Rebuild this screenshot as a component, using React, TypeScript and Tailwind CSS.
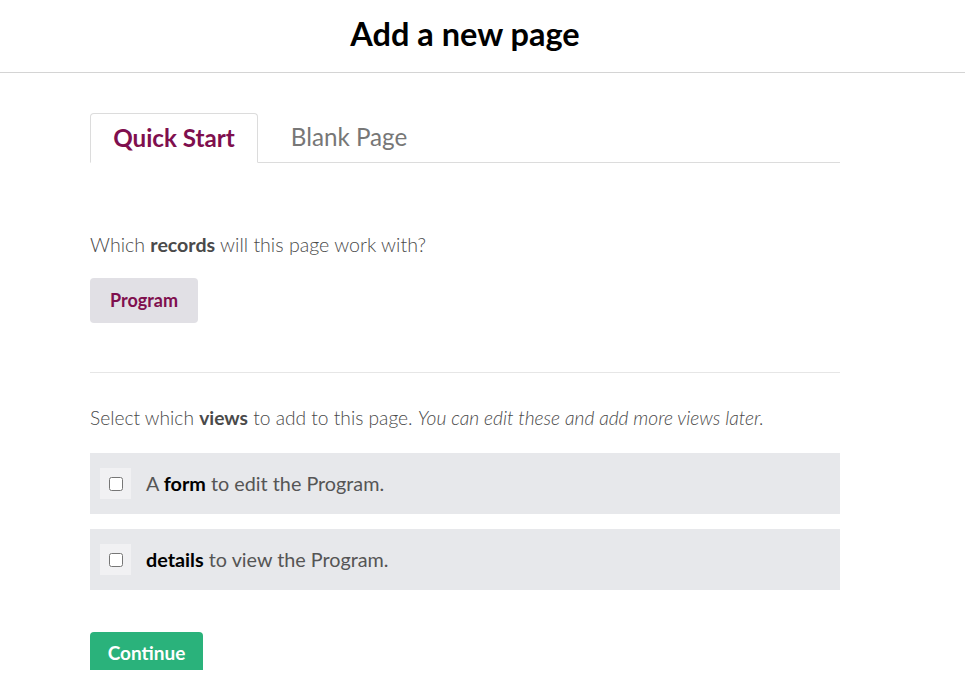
import { useState } from "react";

const views = [
  { bold: "form", before: "A ", after: " to edit the Program." },
  { bold: "details", before: "", after: " to view the Program." },
];

export default function App() {
  const [tab, setTab] = useState("quick");
  const [checked, setChecked] = useState<Record<number, boolean>>({});

  return (
    <div className="h-[670px] overflow-hidden bg-white font-['Lato','Open_Sans',sans-serif] text-[#555]">
      <header className="flex h-[73px] items-center justify-center border-b border-[#d4d4d4] pr-[35px]">
        <h1 className="-mt-[4px] text-[32.5px] font-bold text-black">Add a new page</h1>
      </header>

      <div className="ml-[90px] w-[750px] pt-[40px]">
        <div className="flex border-b border-[#dcdcdc]">
          <button
            onClick={() => setTab("quick")}
            className={
              tab === "quick"
                ? "-mb-px h-[50px] w-[168px] rounded-t-[4px] border border-b-white border-[#dcdcdc] bg-white text-[24.2px] font-bold text-[#7f0f4e]"
                : "h-[49px] w-[168px] text-[24.2px] text-[#777]"
            }
          >
            Quick Start
          </button>
          <button
            onClick={() => setTab("blank")}
            className={
              tab === "blank"
                ? "-mb-px h-[50px] w-[182px] rounded-t-[4px] border border-b-white border-[#dcdcdc] bg-white text-[24.2px] font-bold text-[#7f0f4e]"
                : "h-[49px] w-[182px] text-[24.2px] text-[#777]"
            }
          >
            Blank Page
          </button>
        </div>

        <p className="mt-[67px] text-[19.6px] font-light text-[#4a4a4a]">
          Which <span className="font-bold">records</span> will this page work with?
        </p>
        <button className="mt-[19px] h-[45px] w-[108px] rounded-[4px] bg-[#e1e0e5] text-[18px] font-bold text-[#7f0f4e]">
          Program
        </button>

        <div className="mt-[49px] border-t border-[#e6e6e6]" />

        <p className="mt-[31px] text-[19.2px] font-light text-[#4a4a4a]">
          Select which <span className="font-bold">views</span> to add to this page.{" "}
          <span className="italic">You can edit these and add more views later.</span>
        </p>

        <div className="mt-[20px] flex flex-col gap-[15px]">
          {views.map((v, i) => (
            <label key={i} className="flex h-[61px] cursor-pointer items-center bg-[#e7e8eb] pl-[10px]">
              <span className="flex h-[31px] w-[31px] items-center justify-center bg-[#f1f1f3]">
                <input
                  type="checkbox"
                  checked={!!checked[i]}
                  onChange={() => setChecked({ ...checked, [i]: !checked[i] })}
                  className="h-[14px] w-[14px]"
                />
              </span>
              <span className="ml-[15px] text-[19.8px]">
                {v.before}
                <span className="font-bold text-black">{v.bold}</span>
                {v.after}
              </span>
            </label>
          ))}
        </div>

        <button className="mt-[42px] h-[50px] w-[113px] rounded-[4px] bg-[#2ab27b] pb-[8px] text-[19px] font-bold text-white">
          Continue
        </button>
      </div>
    </div>
  );
}
